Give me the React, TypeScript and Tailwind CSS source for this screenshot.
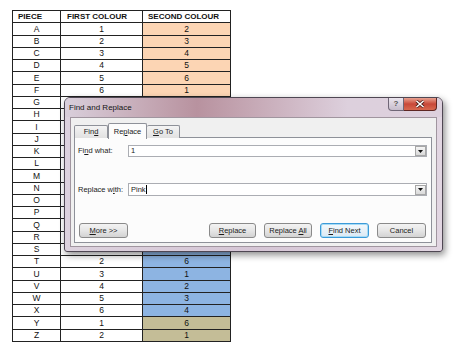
import React from "react";

type Row = [string, number, number, string];

const fills: Record<string, string> = {
  p: "bg-[#fcd5b4]",
  r: "bg-[#e6b8b7]",
  g: "bg-[#d8e4bc]",
  b: "bg-[#8db4e2]",
  k: "bg-[#c4bd97]",
};

const rows: Row[] = [
  ["A", 1, 2, "p"], ["B", 2, 3, "p"], ["C", 3, 4, "p"], ["D", 4, 5, "p"], ["E", 5, 6, "p"], ["F", 6, 1, "p"],
  ["G", 1, 3, "r"], ["H", 2, 4, "r"], ["I", 3, 5, "r"], ["J", 4, 6, "r"], ["K", 5, 1, "r"], ["L", 6, 2, "r"],
  ["M", 1, 4, "g"], ["N", 2, 5, "g"], ["O", 3, 6, "g"], ["P", 4, 1, "g"], ["Q", 5, 2, "g"], ["R", 6, 3, "g"],
  ["S", 1, 5, "b"], ["T", 2, 6, "b"], ["U", 3, 1, "b"], ["V", 4, 2, "b"], ["W", 5, 3, "b"], ["X", 6, 4, "b"],
  ["Y", 1, 6, "k"], ["Z", 2, 1, "k"],
];

const Sheet = () => (
  <div className="ml-[12px] pt-[10px] w-[219px] text-[8px] text-[#111] leading-none">
    <div className="border-l border-t border-[#222]">
      <div className="flex h-[12.25px] font-bold">
        <div className="w-[48px] border-r border-b border-[#222] pl-[5px] flex items-center">PIECE</div>
        <div className="w-[82px] border-r border-b border-[#222] pl-[6px] flex items-center">FIRST COLOUR</div>
        <div className="w-[88px] border-r border-b border-[#222] pl-[5px] flex items-center">SECOND COLOUR</div>
      </div>
      {rows.map(([piece, first, second, fill]) => (
        <div key={piece} className="flex h-[12.25px] text-[8.5px]">
          <div className="w-[48px] border-r border-b border-[#222] flex items-center justify-center">{piece}</div>
          <div className="w-[82px] border-r border-b border-[#222] flex items-center justify-center">{first}</div>
          <div className={`w-[88px] border-r border-b border-[#222] flex items-center justify-center ${fills[fill]}`}>
            {second}
          </div>
        </div>
      ))}
    </div>
  </div>
);

const Key = ({ children }: { children: React.ReactNode }) => <span className="underline underline-offset-1">{children}</span>;

const DropArrow = () => (
  <div className="ml-auto w-[11px] h-[10px] border border-[#a7a7a7] bg-linear-to-b from-[#f6f6f6] to-[#d9d9d9] flex items-center justify-center">
    <svg width="5" height="3" viewBox="0 0 5 3">
      <path d="M0 0h5L2.5 3z" fill="#111" />
    </svg>
  </div>
);

const Btn = ({ w, focus, children }: { w: string; focus?: boolean; children: React.ReactNode }) => (
  <div
    className={`${w} h-[15px] rounded-[3px] border flex items-center justify-center ${
      focus
        ? "border-[#3c9ad8] bg-linear-to-b from-[#f4f9fc] to-[#dbe9f4] shadow-[inset_0_0_0_1px_#a7dcf6]"
        : "border-[#8a8a8a] bg-linear-to-b from-[#f3f3f3] via-[#e6e6e6] to-[#d3d3d3]"
    }`}
  >
    <span>{children}</span>
  </div>
);

const Dialog = () => (
  <div className="absolute left-[64px] top-[97px] w-[379px] h-[155px] rounded-t-[6px] rounded-b-[3px] border border-[#4f4753] bg-linear-to-r from-[#ddd2de] via-[#d6c6d6] to-[#e2d6e2] shadow-[2px_3px_7px_rgba(0,0,0,0.45)] flex flex-col text-[7.5px] text-[#1b1b1b] leading-none">
    <div className="h-[19px] flex items-start rounded-t-[5px] bg-linear-to-r from-[#d9cfdb] from-0% via-[#b8929f] via-35% to-[#ddd0dd] to-75% pr-[5px]">
      <div className="pl-[4px] self-center text-[8px] text-[#151515]">Find and Replace</div>
      <div className="ml-auto flex">
        <div className="w-[16px] h-[13px] border border-t-0 border-[#6f6676] rounded-bl-[4px] bg-linear-to-b from-[#ebe5ee] to-[#c6bccb] flex items-center justify-center text-[8px] text-[#555] font-bold">
          ?
        </div>
        <div className="w-[33px] h-[13px] border border-t-0 border-l-0 border-[#5e2622] rounded-br-[4px] bg-linear-to-b from-[#e8a191] via-[#c84738] to-[#d8684f] flex items-center justify-center">
          <svg width="10" height="8" viewBox="0 0 10 8">
            <path d="M1.5 1l7 6M8.5 1l-7 6" stroke="#4a1a16" strokeWidth="3" />
            <path d="M1.5 1l7 6M8.5 1l-7 6" stroke="#fff" strokeWidth="1.6" />
          </svg>
        </div>
      </div>
    </div>
    <div className="mx-[5px] h-[130px] border border-[#a0959f] bg-[#f0f0f0] pt-[4px] pl-[3px] pr-[4px]">
      <div className="flex items-end h-[16px]">
        <div className="w-[34px] h-[13px] border border-b-0 border-[#8e9199] rounded-t-[2px] bg-linear-to-b from-[#f4f4f4] to-[#e1e1e1] flex items-center justify-center">
          <span>
            Fin<Key>d</Key>
          </span>
        </div>
        <div className="relative z-10 w-[39px] h-[16px] -mb-px border border-b-0 border-[#8e9199] rounded-t-[2px] bg-[#fcfcfc] flex items-center justify-center">
          <span>
            Re<Key>p</Key>lace
          </span>
        </div>
        <div className="w-[33px] h-[13px] border border-b-0 border-l-0 border-[#8e9199] rounded-t-[2px] bg-linear-to-b from-[#f4f4f4] to-[#e1e1e1] flex items-center justify-center">
          <span>
            <Key>G</Key>o To
          </span>
        </div>
      </div>
      <div className="w-[358px] h-[106px] -mt-px border border-[#8e9199] bg-[#fcfcfc] flex flex-col">
        <div className="flex items-center mt-[7px] pl-[3px]">
          <div className="w-[50px]">
            Fi<Key>n</Key>d what:
          </div>
          <div className="w-[299px] h-[12px] border border-[#abadb3] bg-white flex items-center pl-[2px]">
            <span>1</span>
            <DropArrow />
          </div>
        </div>
        <div className="flex items-center mt-[26px] pl-[3px]">
          <div className="w-[50px]">
            Replace w<Key>i</Key>th:
          </div>
          <div className="w-[299px] h-[13px] border border-[#abadb3] bg-white flex items-center pl-[2px]">
            <span>Pink</span>
            <span className="ml-[0.5px] w-px h-[9px] bg-black" />
            <DropArrow />
          </div>
        </div>
        <div className="flex items-center mt-[27px] pl-[4px] pr-[5px]">
          <Btn w="w-[49px]">
            <Key>M</Key>ore &gt;&gt;
          </Btn>
          <div className="ml-auto flex gap-[8px]">
            <Btn w="w-[47px]">
              <Key>R</Key>eplace
            </Btn>
            <Btn w="w-[48px]">
              Replace <Key>A</Key>ll
            </Btn>
            <Btn w="w-[49px]" focus>
              <Key>F</Key>ind Next
            </Btn>
            <Btn w="w-[49px]">Cancel</Btn>
          </div>
        </div>
      </div>
    </div>
  </div>
);

export default function App() {
  return (
    <div className="relative w-[454px] h-[357px] bg-white overflow-hidden font-['Liberation_Sans',Arial,sans-serif]">
      <Sheet />
      <Dialog />
    </div>
  );
}
